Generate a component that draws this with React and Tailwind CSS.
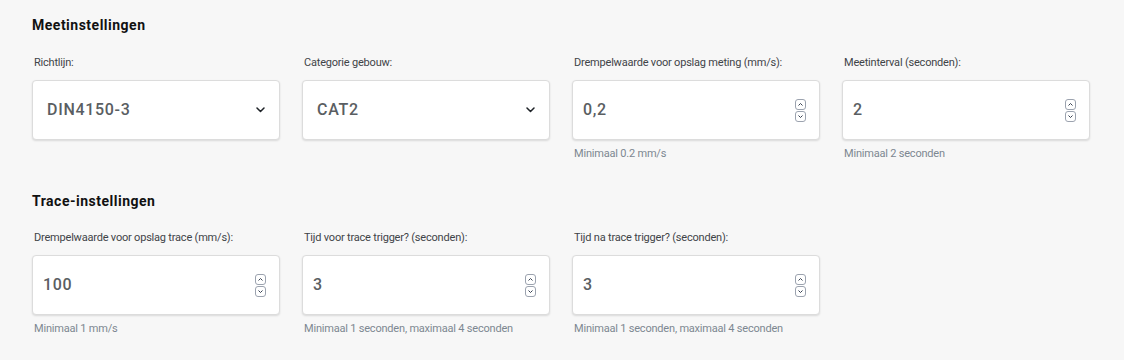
const font = { fontFamily: 'Roboto, "Noto Sans", sans-serif' };

function Spinner() {
  return (
    <div className="flex flex-col gap-[1px]">
      <svg width="11" height="11" viewBox="0 0 11 11">
        <rect x="0.5" y="0.5" width="10" height="10" rx="2.5" fill="white" stroke="#9ca3af" />
        <path d="M3.5 6.5 L5.5 4.5 L7.5 6.5" fill="none" stroke="#374151" strokeWidth="1" />
      </svg>
      <svg width="11" height="11" viewBox="0 0 11 11">
        <rect x="0.5" y="0.5" width="10" height="10" rx="2.5" fill="white" stroke="#9ca3af" />
        <path d="M3.5 4.5 L5.5 6.5 L7.5 4.5" fill="none" stroke="#374151" strokeWidth="1" />
      </svg>
    </div>
  );
}

function Chevron() {
  return (
    <svg width="9" height="6" viewBox="0 0 9 6">
      <path d="M1 1 L4.5 4.5 L8 1" fill="none" stroke="#1f2328" strokeWidth="1.5" strokeLinecap="round" strokeLinejoin="round" />
    </svg>
  );
}

function Field({ label, value, hint, select }) {
  return (
    <div className="flex flex-col">
      <label className="pl-[2px] text-[11px] text-[#3f4448] mb-[9px] leading-[16px] tracking-[-0.2px]">{label}</label>
      <div className={`h-[60px] bg-white border border-[#dcdcdc] rounded-[4px] shadow-[0_1px_2px_rgba(0,0,0,0.12)] flex items-center justify-between ${select ? 'pl-[14px] pr-[14px]' : 'pl-[10px] pr-[13px]'}`}>
        <span className="text-[16px] font-medium text-[#5a5e62] tracking-[0.7px]">{value}</span>
        {select ? <Chevron /> : <Spinner />}
      </div>
      <div className="h-[28px] pl-[2px] pt-[7px] text-[11px] text-[#7d8791] leading-[14px] tracking-[-0.2px]">{hint}</div>
    </div>
  );
}

export default function App() {
  return (
    <div style={font} className="w-[1124px] h-[360px] bg-[#f7f7f7] px-[32px] pt-[15px]">
      <h2 className="text-[14px] font-bold text-[#111] tracking-[0.5px] leading-[20px] mb-[20px]">Meetinstellingen</h2>
      <div className="grid grid-cols-4 gap-x-[22px] w-[1058px]">
        <Field label="Richtlijn:" value="DIN4150-3" select />
        <Field label="Categorie gebouw:" value="CAT2" select />
        <Field label="Drempelwaarde voor opslag meting (mm/s):" value="0,2" hint="Minimaal 0.2 mm/s" />
        <Field label="Meetinterval (seconden):" value="2" hint="Minimaal 2 seconden" />
      </div>
      <h2 className="text-[14px] font-bold text-[#111] tracking-[0.5px] leading-[20px] mt-[23px] mb-[19px]">Trace-instellingen</h2>
      <div className="grid grid-cols-4 gap-x-[22px] w-[1058px]">
        <Field label="Drempelwaarde voor opslag trace (mm/s):" value="100" hint="Minimaal 1 mm/s" />
        <Field label="Tijd voor trace trigger? (seconden):" value="3" hint="Minimaal 1 seconden, maximaal 4 seconden" />
        <Field label="Tijd na trace trigger? (seconden):" value="3" hint="Minimaal 1 seconden, maximaal 4 seconden" />
      </div>
    </div>
  );
}
